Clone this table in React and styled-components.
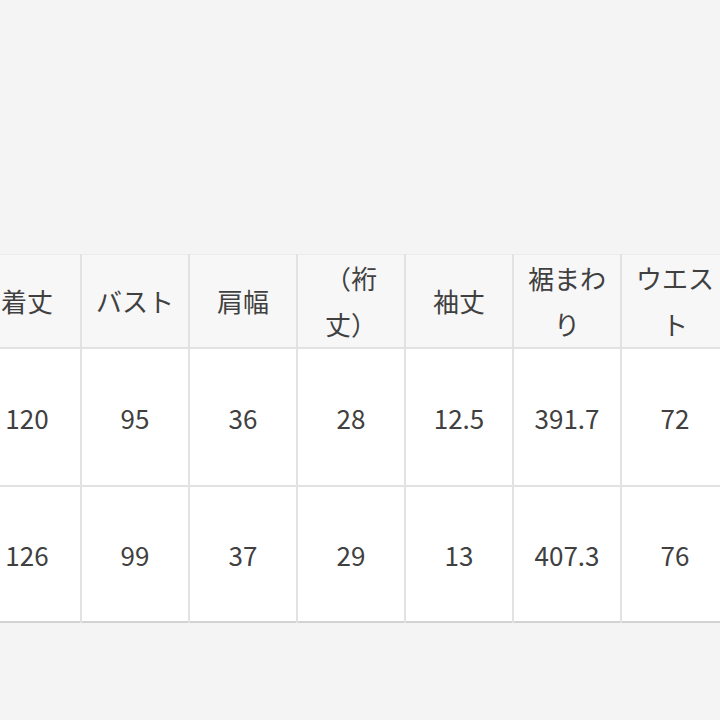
import styled, { createGlobalStyle } from "styled-components"

const GlobalStyle = createGlobalStyle`
  html, body {
    margin: 0;
    padding: 0;
    background: #f4f4f4;
  }
  body {
    font-family: "Noto Sans CJK JP", "Noto Sans", sans-serif;
    color: #404040;
  }
`

const Page = styled.div`
  width: 720px;
  height: 720px;
  overflow: hidden;
  padding-top: 254px;
  box-sizing: border-box;
`

const SizeTable = styled.table`
  border-collapse: collapse;
  table-layout: fixed;
  width: 758px;
  margin-left: -28px;
  border-top: 1px solid #ececec;
  border-bottom: 2px solid #d2d2d2;
`

const HeadCell = styled.th`
  width: 108px;
  height: 92px;
  padding: 0 9px;
  box-sizing: border-box;
  background: #f7f7f7;
  border: 2px solid #e2e2e2;
  border-top: none;
  font-weight: 400;
  font-size: 26px;
  line-height: 46px;
  text-align: center;
  vertical-align: middle;
  word-break: break-all;
`

const ValueCell = styled.td`
  height: ${(p) => p.$h}px;
  padding: 0;
  background: #ffffff;
  border: 2px solid #e2e2e2;
  border-bottom: none;
  font-family: "Noto Sans CJK JP", "Noto Sans", sans-serif;
  font-size: 26px;
  text-align: center;
  vertical-align: middle;
`

const headers = ["着丈", "バスト", "肩幅", "（裄丈）", "袖丈", "裾まわり", "ウエスト"]

const rows = [
  { h: 136, values: ["120", "95", "36", "28", "12.5", "391.7", "72"] },
  { h: 134, values: ["126", "99", "37", "29", "13", "407.3", "76"] },
]

const App = () => (
  <Page>
    <GlobalStyle />
    <SizeTable>
      <thead>
        <tr>
          {headers.map((h) => (
            <HeadCell key={h}>{h}</HeadCell>
          ))}
        </tr>
      </thead>
      <tbody>
        {rows.map((r, i) => (
          <tr key={i}>
            {r.values.map((v, j) => (
              <ValueCell key={j} $h={r.h}>
                {v}
              </ValueCell>
            ))}
          </tr>
        ))}
      </tbody>
    </SizeTable>
  </Page>
)

export default App
